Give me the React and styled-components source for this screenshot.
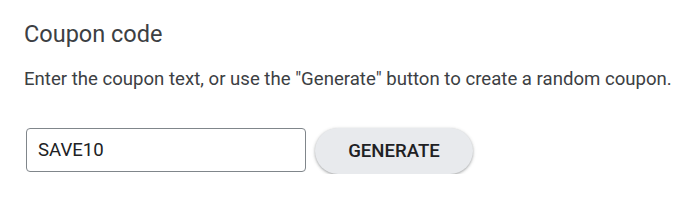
import React from "react";
import styled, { createGlobalStyle } from "styled-components";

const Global = createGlobalStyle`
  html, body { margin: 0; padding: 0; background: #ffffff; }
  body { font-family: Roboto, "Noto Sans", Arial, sans-serif; -webkit-font-smoothing: antialiased; }
`;

const Page = styled.div`
  padding: 20px 24px 0 24px;
  display: flex;
  flex-direction: column;
`;

const Title = styled.h2`
  margin: 0;
  font-size: 23.5px;
  line-height: 28px;
  font-weight: 400;
  color: #3c4043;
`;

const Description = styled.p`
  margin: 19px 0 0 0;
  font-size: 18.6px;
  line-height: 24px;
  color: #3c4043;
  white-space: nowrap;
`;

const Row = styled.div`
  margin-top: 37px;
  margin-left: 2px;
  display: flex;
  align-items: flex-start;
  gap: 9px;
`;

const Input = styled.input`
  box-sizing: border-box;
  width: 280px;
  height: 44px;
  padding: 0 11px;
  border: 1px solid #80868b;
  border-radius: 4px;
  font-family: Roboto, "Noto Sans", Arial, sans-serif;
  font-size: 18.6px;
  color: #202124;
  background: #fff;
  outline: none;
`;

const Button = styled.button`
  box-sizing: border-box;
  width: 158px;
  height: 46px;
  border: none;
  border-radius: 23px;
  background: #e8eaed;
  color: #202124;
  font-family: Roboto, "Noto Sans", Arial, sans-serif;
  font-size: 18.6px;
  font-weight: 500;
  box-shadow: 0 1px 2px rgba(60, 64, 67, 0.3), 0 1px 3px 1px rgba(60, 64, 67, 0.15);
  cursor: pointer;
`;

export default function App() {
  return (
    <>
      <Global />
      <Page>
        <Title>Coupon code</Title>
        <Description>
          Enter the coupon text, or use the "Generate" button to create a random coupon.
        </Description>
        <Row>
          <Input defaultValue="SAVE10" />
          <Button>GENERATE</Button>
        </Row>
      </Page>
    </>
  );
}
